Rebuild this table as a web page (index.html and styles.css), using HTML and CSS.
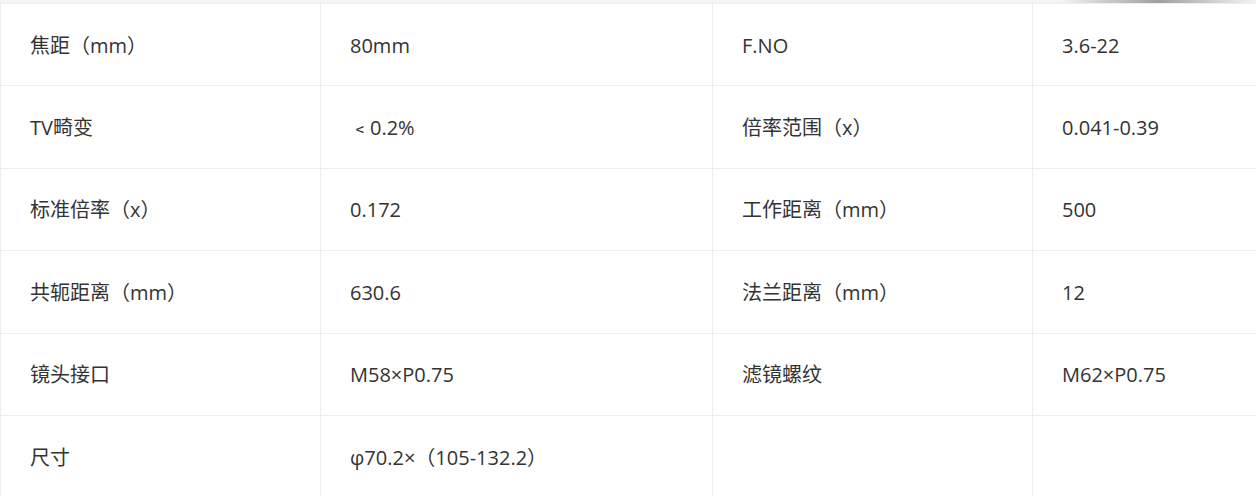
FILE: index.html
```html
<!DOCTYPE html>
<html lang="zh-CN">
<head>
<meta charset="utf-8">
<title>参数</title>
<link rel="stylesheet" href="styles.css">
</head>
<body>
<div class="topbar"><div class="shade"></div></div>
<div class="wrap">
<table class="spec">
<colgroup><col class="c1"><col class="c2"><col class="c3"><col class="c4"></colgroup>
<tbody>
<tr><td>焦距（mm）</td><td>80mm</td><td>F.NO</td><td>3.6-22</td></tr>
<tr><td>TV畸变</td><td>﹤0.2%</td><td>倍率范围（x）</td><td>0.041-0.39</td></tr>
<tr><td>标准倍率（x）</td><td>0.172</td><td>工作距离（mm）</td><td>500</td></tr>
<tr><td>共轭距离（mm）</td><td>630.6</td><td>法兰距离（mm）</td><td>12</td></tr>
<tr><td>镜头接口</td><td>M58×P0.75</td><td>滤镜螺纹</td><td>M62×P0.75</td></tr>
<tr><td>尺寸</td><td>φ70.2×（105-132.2）</td><td></td><td></td></tr>
</tbody>
</table>
</div>
</body>
</html>
```
FILE: styles.css
```css
html, body {
  margin: 0;
  padding: 0;
  background: #fff;
}
body {
  font-family: "Open Sans", "Noto Sans CJK SC", sans-serif;
  color: #333333;
  overflow: hidden;
}
.topbar {
  height: 3px;
  background: #f3f4f6;
  position: relative;
}
.shade {
  position: absolute;
  left: 1060px;
  width: 196px;
  top: 0;
  height: 3px;
  background: linear-gradient(90deg, rgba(160,160,160,0) 0%, rgba(150,150,150,0.9) 50%, rgba(160,160,160,0) 100%);
}
.wrap {
  width: 1256px;
  overflow: hidden;
}
.spec {
  border-collapse: collapse;
  table-layout: fixed;
  width: 1352px;
  font-size: 20px;
}
.c1 { width: 320px; }
.c2 { width: 392px; }
.c3 { width: 320px; }
.c4 { width: 320px; }
.spec td {
  border: 1px solid #eeeeee;
  height: 82.4px;
  padding: 2px 0 0 29px;
  box-sizing: border-box;
  vertical-align: middle;
  line-height: 26px;
  white-space: nowrap;
}
```
